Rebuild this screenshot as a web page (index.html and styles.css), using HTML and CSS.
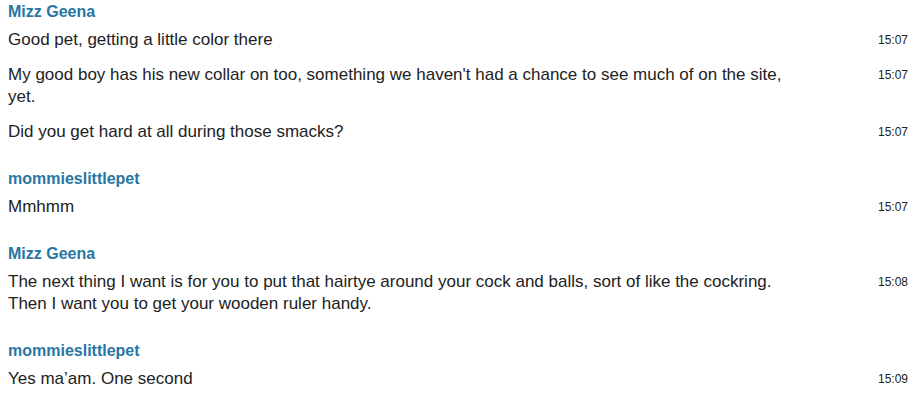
FILE: index.html
```html
<!DOCTYPE html>
<html>
<head>
<meta charset="utf-8">
<link rel="stylesheet" href="styles.css">
</head>
<body>
<div class="chat">
  <div class="group">
    <div class="name">Mizz Geena</div>
    <div class="msg"><div class="text">Good pet, getting a little color there</div><div class="time">15:07</div></div>
    <div class="msg"><div class="text">My good boy has his new collar on too, something we haven't had a chance to see much of on the site, yet.</div><div class="time">15:07</div></div>
    <div class="msg"><div class="text">Did you get hard at all during those smacks?</div><div class="time">15:07</div></div>
  </div>
  <div class="group">
    <div class="name">mommieslittlepet</div>
    <div class="msg"><div class="text">Mmhmm</div><div class="time">15:07</div></div>
  </div>
  <div class="group">
    <div class="name">Mizz Geena</div>
    <div class="msg"><div class="text">The next thing I want is for you to put that hairtye around your cock and balls, sort of like the cockring. Then I want you to get your wooden ruler handy.</div><div class="time">15:08</div></div>
  </div>
  <div class="group">
    <div class="name">mommieslittlepet</div>
    <div class="msg"><div class="text">Yes ma’am. One second</div><div class="time">15:09</div></div>
  </div>
</div>
</body>
</html>
```
FILE: styles.css
```css
html, body {
  margin: 0;
  padding: 0;
  background: #fff;
}
body {
  font-family: Arial, "Liberation Sans", sans-serif;
  color: #222;
}
.chat {
  padding: 1px 14px 0 8px;
}
.group {
  padding-bottom: 12px;
}
.name {
  font-weight: bold;
  font-size: 16px;
  line-height: 22px;
  color: #2776a3;
  margin-bottom: 6px;
}
.msg {
  display: flex;
  align-items: flex-start;
  margin-bottom: 13px;
}
.text {
  width: 800px;
  font-size: 17px;
  line-height: 22px;
}
.time {
  margin-left: auto;
  font-size: 12px;
  line-height: 22px;
}
```
